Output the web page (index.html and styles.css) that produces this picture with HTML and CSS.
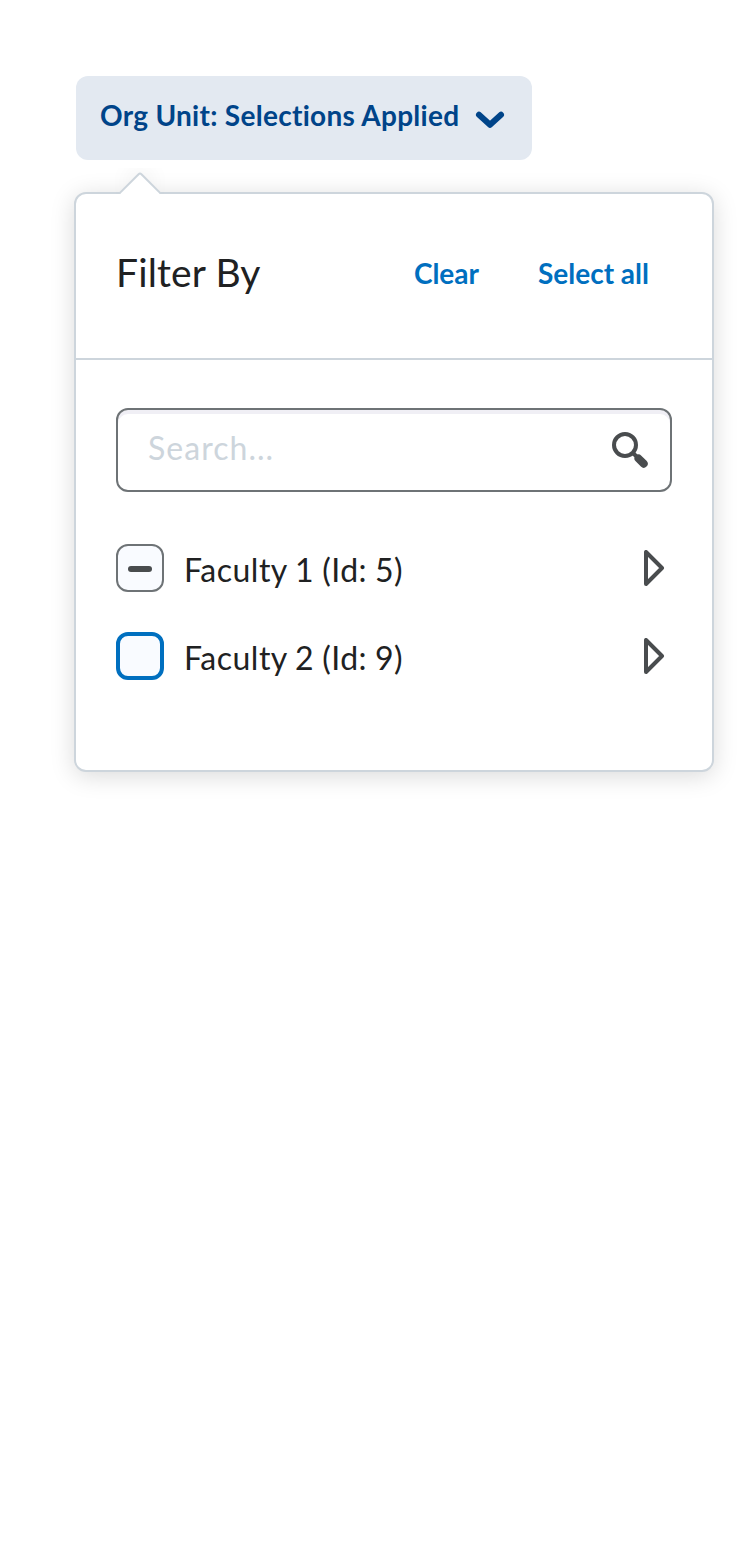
FILE: index.html
```html
<!DOCTYPE html>
<html lang="en">
<head>
<meta charset="utf-8">
<title>Org Unit Filter</title>
<link rel="stylesheet" href="styles.css">
</head>
<body>
<button class="opener" type="button">
  <span class="opener-text">Org Unit: Selections Applied</span>
  <svg class="chevron" width="36" height="36" viewBox="0 0 36 36"><path d="M7 14.800 18 24.800 29 14.800" fill="none" stroke="#004489" stroke-width="6" stroke-linecap="round" stroke-linejoin="round"/></svg>
</button>
<section class="dropdown">
  <div class="pointer"><div class="pointer-tip"></div></div>
  <header class="header">
    <h1 class="title">Filter By</h1>
    <button class="link" type="button">Clear</button>
    <button class="link" type="button">Select all</button>
  </header>
  <div class="content">
    <div class="search">
      <input class="search-input" type="text" placeholder="Search...">
      <svg class="search-icon" width="36" height="36" viewBox="0 0 36 36" fill="none" stroke="#494c4e"><circle cx="13" cy="13" r="11" stroke-width="4"/><path d="M20.500 20.500 25 25" stroke-width="4"/><path d="M26.500 26.500 31.700 31.700" stroke-width="8" stroke-linecap="round"/></svg>
    </div>
    <ul class="tree">
      <li class="node">
        <span class="checkbox mixed"></span>
        <span class="name">Faculty 1 (Id: 5)</span>
        <svg class="arrow" width="22" height="36" viewBox="0 0 22 36"><path d="M2 2V34L18 18Z" fill="none" stroke="#494c4e" stroke-width="4" stroke-linejoin="round"/></svg>
      </li>
      <li class="node">
        <span class="checkbox focused"></span>
        <span class="name">Faculty 2 (Id: 9)</span>
        <svg class="arrow" width="22" height="36" viewBox="0 0 22 36"><path d="M2 2V34L18 18Z" fill="none" stroke="#494c4e" stroke-width="4" stroke-linejoin="round"/></svg>
      </li>
    </ul>
  </div>
</section>
</body>
</html>
```
FILE: styles.css
```css
* { box-sizing: border-box; }

body {
  min-height: 1552px;
  margin: 0;
  padding: 76px 26px 0 74px;
  background: #fff;
  color: #202122;
  font-family: Lato, sans-serif;
}

button {
  border: 0;
  background: none;
  font: 700 28px/40px Lato, sans-serif;
}

.opener {
  display: flex;
  align-items: center;
  width: 456px;
  height: 84px;
  margin-left: 2px;
  padding: 0 24px;
  border-radius: 12px;
  background: #e3e9f1;
  color: #004489;
  letter-spacing: 0.29px;
}

.opener-text {
  flex: 1;
  padding-bottom: 6px;
  text-align: left;
  white-space: nowrap;
}

.chevron { display: block; }

.dropdown {
  position: relative;
  width: 640px;
  height: 580px;
  margin-top: 32px;
  border: 2px solid #cdd5dc;
  border-radius: 12px;
  background: #fff;
  box-shadow: 0 4px 24px rgba(0, 0, 0, 0.15);
}

/* The lower half of the rotated square is clipped at the panel border. */
.pointer {
  position: absolute;
  top: -16px;
  left: 48px;
  clip-path: inset(-10px -10px 16px -10px);
}

.pointer-tip {
  width: 32px;
  height: 32px;
  border: 2px solid #cdd5dc;
  border-radius: 3px;
  background: #fff;
  box-shadow: -8px -8px 24px -10px rgba(32, 33, 34, 0.2);
  transform: rotate(45deg);
}

.header {
  display: flex;
  align-items: center;
  height: 166px;
  padding: 0 39px 0 40px;
  border-bottom: 2px solid #cdd5dc;
}

.title {
  flex: 1;
  margin: 0;
  padding-bottom: 8px;
  font-size: 39px;
  font-weight: 400;
  line-height: 48px;
  letter-spacing: 0.15px;
}

.link {
  margin-bottom: 6px;
  padding: 0 24px;
  color: #006fbf;
}

.link + .link { margin-left: 11px; }

.content { padding: 48px 40px; }

.search {
  display: flex;
  align-items: center;
  height: 84px;
  padding: 0 22px 0 30px;
  border: 2px solid #6e7376;
  border-radius: 12px;
  box-shadow: inset 0 4px 0 #f0eff5;
}

.search-input {
  flex: 1;
  min-width: 0;
  padding: 0 0 4px;
  border: 0;
  outline: 0;
  background: none;
  font: 400 32px/44px Lato, sans-serif;
  letter-spacing: 1.04px;
}

.search-input::placeholder { color: #cdd5dc; opacity: 1; }

.tree {
  display: grid;
  gap: 40px;
  margin: 52px 0 0;
  padding: 0;
  list-style: none;
}

.node {
  display: flex;
  align-items: center;
  height: 48px;
}

.checkbox {
  display: flex;
  align-items: center;
  justify-content: center;
  width: 48px;
  height: 48px;
  border: 2px solid #6e7376;
  border-radius: 12px;
  background: #f9fbff;
}

.mixed::before {
  content: "";
  width: 24px;
  height: 6px;
  margin-top: 2px;
  border-radius: 3px;
  background: #494c4e;
}

.focused { border: 4px solid #006fbf; }

.name {
  flex: 1;
  margin-left: 20px;
  padding-top: 4px;
  font-size: 32px;
  line-height: 44px;
  letter-spacing: 0.5px;
  word-spacing: -0.7px;
}

.arrow { margin-right: 6px; }
```
